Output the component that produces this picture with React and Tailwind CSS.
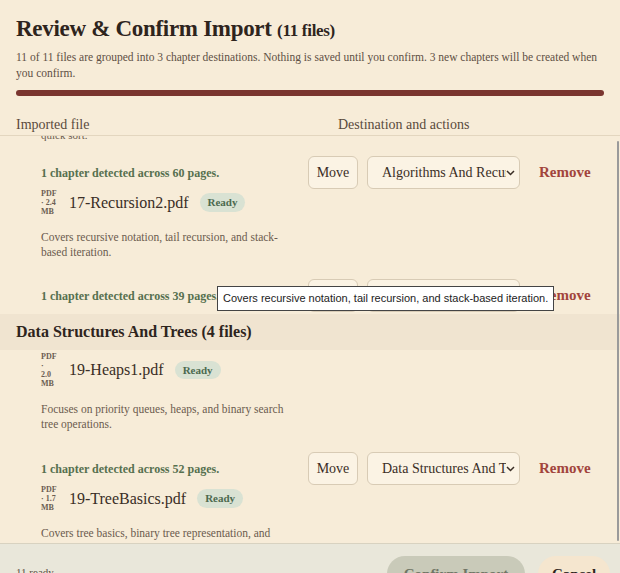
import React from "react";

const serif = { fontFamily: '"Liberation Serif", Georgia, serif' };

function Chevron() {
  return (
    <svg width="9" height="6" viewBox="0 0 9 6" className="shrink-0"><path d="M1 1l3.5 3.5L8 1" stroke="#3a2e26" strokeWidth="1.5" fill="none" /></svg>
  );
}

function Meta({ size, stacked }) {
  return (
    <div className="flex flex-col text-[8px] font-bold leading-[9px] text-[#6b5d52] w-[22px] shrink-0">
      <span>PDF</span>
      {stacked ? (<><span>·</span><span>{size}</span></>) : <span>· {size}</span>}
      <span>MB</span>
    </div>
  );
}

function Actions({ dest }) {
  return (
    <div className="flex items-start pl-[41px] gap-[9px]">
      <button className="w-[50px] h-[33px] border border-[#d8cbb5] rounded-md bg-[#fbf3e4] text-[14px] text-[#3a2e26]" style={serif}>Move</button>
      <div className="w-[153px] h-[33px] border border-[#d8cbb5] rounded-md bg-[#fbf3e4] text-[14px] text-[#3a2e26] flex items-center pl-[14px] pr-[4px] overflow-hidden whitespace-nowrap">
        <span className="overflow-hidden flex-1">{dest}</span>
        <Chevron />
      </div>
      <span className="ml-[10px] h-[33px] flex items-center text-[15px] font-bold text-[#a2443c]">Remove</span>
    </div>
  );
}

function FileRow({ detected, name, size, stacked, desc, dest }) {
  return (
    <div className="flex">
      <div className="w-[267px] pl-[41px] flex flex-col">
        {detected && <div className="text-[12px] font-bold text-[#56704f] h-[33px] flex items-center">{detected}</div>}
        <div className="flex items-center gap-[6px]">
          <Meta size={size} stacked={stacked} />
          <span className="text-[16px] text-[#3a2e26] whitespace-nowrap">{name}</span>
          <span className="ml-[5px] px-[8px] py-[1px] rounded-full bg-[#d9e2d3] text-[#4c6a4f] text-[11px] font-bold">Ready</span>
        </div>
        <div className="mt-[14px] text-[11.5px] leading-[15px] text-[#6b5b4e] w-[250px]">{desc}</div>
      </div>
      {dest && <Actions dest={dest} />}
    </div>
  );
}

export default function App() {
  return (
    <div className="w-[620px] h-[573px] bg-[#f7ecd8] flex flex-col overflow-hidden relative" style={serif}>
      <div className="px-[16px] pt-[14px] border-b border-[#e3d6bf] h-[136px] shrink-0">
        <div className="text-[#2e241d] text-[23px] font-bold tracking-[-0.3px] leading-[30px]">
          Review &amp; Confirm Import <span className="text-[17px]">(11 files)</span>
        </div>
        <p className="text-[11.5px] leading-[16px] text-[#5e4f44] mt-[3px]">
          11 of 11 files are grouped into 3 chapter destinations. Nothing is saved until you confirm. 3 new chapters will be created when you confirm.
        </p>
        <div className="mt-[9px] h-[6px] rounded-full bg-[#7a352f]" />
        <div className="flex mt-[18px] text-[14px] text-[#5a4a3c]">
          <span className="w-[322px]">Imported file</span>
          <span>Destination and actions</span>
        </div>
      </div>
      <div className="flex-1 overflow-hidden relative">
        <div className="-mt-[9px]">
          <div className="pl-[41px] text-[11px] text-[#6b5b4e] h-[16px]">quick sort.</div>
          <div className="mt-[13px]">
            <FileRow detected="1 chapter detected across 60 pages." name="17-Recursion2.pdf" size="2.4" desc="Covers recursive notation, tail recursion, and stack-based iteration." dest="Algorithms And Recursion" />
          </div>
          <div className="mt-[19px] h-[35px] flex overflow-hidden">
            <div className="w-[267px] pl-[41px] text-[12px] font-bold text-[#56704f] h-[33px] flex items-center whitespace-nowrap">1 chapter detected across 39 pages.</div>
            <Actions dest="Algorithms And Recursion" />
          </div>
          <div className="bg-[#f0e4d0] h-[36px] flex items-center px-[16px] text-[16px] font-bold text-[#2e241d]">
            Data Structures And Trees (4 files)
          </div>
          <div className="mt-[2px]">
            <FileRow name="19-Heaps1.pdf" size="2.0" stacked desc="Focuses on priority queues, heaps, and binary search tree operations." />
          </div>
          <div className="mt-[20px]">
            <FileRow detected="1 chapter detected across 52 pages." name="19-TreeBasics.pdf" size="1.7" desc="Covers tree basics, binary tree representation, and traversals." dest="Data Structures And Trees" />
          </div>
        </div>
        <div className="absolute left-[217px] top-[150px] bg-white border border-[#444] px-[5px] py-[3px] text-[11px] text-[#222] whitespace-nowrap" style={{ fontFamily: '"Liberation Sans", Arial, sans-serif' }}>
          Covers recursive notation, tail recursion, and stack-based iteration.
        </div>
        <div className="absolute right-[1px] top-[5px] w-[2px] h-[400px] bg-[#9a9a9a] rounded" />
      </div>
      <div className="h-[30px] shrink-0 bg-[#e9e7da] border-t border-[#d8d2c0] flex items-start pl-[16px] pr-[10px] overflow-hidden">
        <span className="text-[11px] text-[#5e4f44] mt-[20px]">11 ready</span>
        <div className="flex-1" />
        <div className="mt-[12px] w-[138px] h-[36px] rounded-full bg-[#c9cab9] text-[#6f7564] text-[15px] font-bold flex justify-center pt-[7px]">Confirm Import</div>
        <div className="ml-[13px] mt-[12px] w-[72px] h-[36px] rounded-full bg-[#f5e6cf] text-[#2e241d] text-[15px] font-bold flex justify-center pt-[7px]">Cancel</div>
      </div>
    </div>
  );
}
